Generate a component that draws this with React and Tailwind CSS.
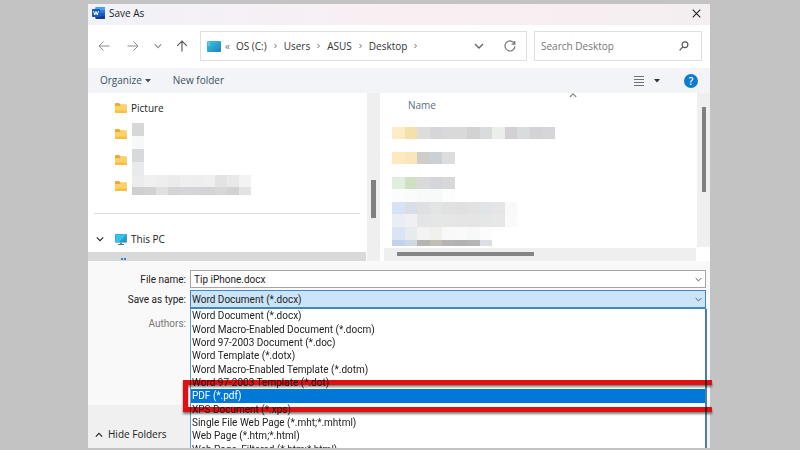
import React, { useState } from 'react';

const fileTypes = [
  'Word Document (*.docx)',
  'Word Macro-Enabled Document (*.docm)',
  'Word 97-2003 Document (*.doc)',
  'Word Template (*.dotx)',
  'Word Macro-Enabled Template (*.dotm)',
  'Word 97-2003 Template (*.dot)',
  'PDF (*.pdf)',
  'XPS Document (*.xps)',
  'Single File Web Page (*.mht;*.mhtml)',
  'Web Page (*.htm;*.html)',
  'Web Page, Filtered (*.htm;*.html)',
];

const path = ['OS (C:)', 'Users', 'ASUS', 'Desktop'];

// pixelated names in the tree
const treeColumn = ['bg-[#d6d7d9]', 'bg-[#f7f8f8]', 'bg-[#d8d9db]', 'bg-[#e9eaeb]'];
const treeTop = ['bg-[#ececed]', 'bg-[#f0f0f0]', 'bg-[#eeeeee]', 'bg-[#ebebeb]', 'bg-[#efefef]', 'bg-[#eeeeee]', 'bg-[#efeff0]', 'bg-[#e4e3e4]', 'bg-[#e9e9e9]', 'bg-[#f3f3f3]'];
const treeBottom = ['bg-[#cfcfd1]', 'bg-[#d2d2d4]', 'bg-[#e0e0e1]', 'bg-[#d4d3d5]', 'bg-[#d6d6d8]', 'bg-[#d5d5d7]', 'bg-[#d4d4d6]', 'bg-[#d8d8d9]', 'bg-[#d3d1d3]', 'bg-[#e3e3e4]'];

// pixelated names in the file list, 13 cells per strip
const fileStrips = [
  { h: 'h-[12px]', cells: ['bg-[#fdecc4]', 'bg-[#f5e0ac]', 'bg-[#dddddd]', 'bg-[#d6d6d8]', 'bg-[#d9d9db]', 'bg-[#d9d9da]', 'bg-[#d2d2d3]', 'bg-[#d9dcdd]', 'bg-[#eceeeb]', 'bg-[#d3d0d3]', 'bg-[#d8dcde]', 'bg-[#d5d2d5]', 'bg-[#d6d6d8]'] },
  { h: 'h-[13px]', cells: [] },
  { h: 'h-[12px]', cells: ['bg-[#fce9c0]', 'bg-[#f9e6bb]', 'bg-[#cfcdc9]', 'bg-[#cad0d4]', 'bg-[#dcdddf]'] },
  { h: 'h-[13px]', cells: [] },
  { h: 'h-[12px]', cells: ['bg-[#dfeedd]', 'bg-[#d0e0c3]', 'bg-[#d9d9da]', 'bg-[#d5d6dc]', 'bg-[#d8d8d8]'] },
  { h: 'h-[13px]', cells: ['bg-[#fbfcfb]', 'bg-[#fafbfa]', 'bg-[#f8f9f9]', 'bg-[#f8f9f9]', 'bg-[#fdfdfd]'] },
  { h: 'h-[12px]', cells: ['bg-[#d5e3f5]', 'bg-[#d9dde8]', 'bg-[#dfe0e2]', 'bg-[#e3e5e5]', 'bg-[#e1e1e1]', 'bg-[#e0e0e1]', 'bg-[#e2e2e2]', 'bg-[#e1e4e5]', 'bg-[#e5e5e6]', 'bg-[#f9f9f9]'] },
  { h: 'h-[13px]', cells: ['bg-[#e9edf4]', 'bg-[#eef0f1]', 'bg-[#e4e5e6]', 'bg-[#e5e6e6]', 'bg-[#e6e6e6]', 'bg-[#e5e5e6]', 'bg-[#e5e5e5]', 'bg-[#e5e6e6]', 'bg-[#e7e7e7]', 'bg-[#fafafa]'] },
  { h: 'h-[13px]', cells: ['bg-[#dbe4f4]', 'bg-[#e8ebed]', 'bg-[#f2f3f2]', 'bg-[#f0f0ec]', 'bg-[#f9f9f9]', 'bg-[#fafafa]', 'bg-[#f7f9f9]', 'bg-[#fcfcfc]'] },
  { h: 'h-[6px]', cells: ['bg-[#c2d1ec]', 'bg-[#cfd8e6]', 'bg-[#b5b5b3]', 'bg-[#bfbfb8]', 'bg-[#b6b4b5]', 'bg-[#b3b2b3]', 'bg-[#b6b5b6]', 'bg-[#dcdfe3]'] },
];

function Chevron({ className, d = 'M1 3l4 4 4-4' }) {
  return (
    <svg viewBox="0 0 10 10" className={className} fill="none" stroke="currentColor" strokeWidth="1.4">
      <path d={d} />
    </svg>
  );
}

function Caret() {
  return (
    <svg viewBox="0 0 6 4" className="w-[6px] h-[4px]" fill="currentColor">
      <path d="M0 0h6L3 3.6z" />
    </svg>
  );
}

function WordIcon() {
  return (
    <svg viewBox="0 0 26 24" className="w-[13px] h-[12px]">
      <rect x="7" y="0" width="19" height="24" rx="2" fill="#2b7cd3" />
      <path d="M7 2a2 2 0 0 1 2-2h15a2 2 0 0 1 2 2v4H7z" fill="#41a5ee" />
      <rect x="7" y="12" width="19" height="6" fill="#185abd" />
      <path d="M7 18h19v4a2 2 0 0 1-2 2H9a2 2 0 0 1-2-2z" fill="#103f91" />
      <rect x="0" y="4" width="16" height="16" rx="1.5" fill="#185abd" />
      <path d="M3 8l2.500 8L8 9l2.500 7L13 8" fill="none" stroke="#fff" strokeWidth="2" />
    </svg>
  );
}

function FolderIcon() {
  return (
    <svg viewBox="0 0 24 20" className="w-[12px] h-[10px] shrink-0">
      <path d="M0 2a2 2 0 0 1 2-2h6l3 3h11a2 2 0 0 1 2 2v4H0z" fill="#e8ab35" />
      <path d="M0 6h9l3-2h12v14a2 2 0 0 1-2 2H2a2 2 0 0 1-2-2z" fill="#fcd266" />
      <path d="M0 15h24v3a2 2 0 0 1-2 2H2a2 2 0 0 1-2-2z" fill="#f6c044" />
    </svg>
  );
}

function DesktopIcon() {
  return (
    <svg viewBox="0 0 28 22" className="w-[14px] h-[11px] shrink-0">
      <defs>
        <linearGradient id="desk" x1="0" y1="0" x2="1" y2="1">
          <stop offset="0" stopColor="#3ccbd8" />
          <stop offset="1" stopColor="#1b7fc0" />
        </linearGradient>
      </defs>
      <rect width="28" height="22" rx="2" fill="url(#desk)" />
      <path d="M3 4h2M3 8h2" stroke="#d8f7fb" strokeWidth="2" />
    </svg>
  );
}

function MonitorIcon() {
  return (
    <svg viewBox="0 0 24 22" className="w-[12px] h-[11px] shrink-0">
      <rect x="0.5" y="0.5" width="23" height="16" rx="1" fill="#1f9ed8" stroke="#1a6d9c" />
      <path d="M1 1h22L8 16H1z" fill="#35c3e6" />
      <path d="M10 17h4v3h-4z" fill="#7a8a94" />
      <path d="M6 21h12" stroke="#5f6f79" strokeWidth="2" />
    </svg>
  );
}

function Strip({ cells, className }) {
  return (
    <div className={`grid ${className}`}>
      {cells.map((cell, i) => (
        <span key={i} className={cell} />
      ))}
    </div>
  );
}

function TitleBar() {
  return (
    <header className="flex items-center h-[21px] pl-1 pr-[9px] pb-[3px] bg-linear-to-r from-[#f1f2f9] via-[#f9eff2] to-[#f5eef1]">
      <WordIcon />
      <h1 className="ml-1 flex-1 text-[10px] text-[#1c1c1c]">Save As</h1>
      <button type="button" aria-label="Close" className="text-[#222]">
        <svg viewBox="0 0 10 10" className="w-[9px] h-[9px]" fill="none" stroke="currentColor" strokeWidth="1.2">
          <path d="M0.8 0.8l8.4 8.4M9.2 0.8L0.8 9.2" />
        </svg>
      </button>
    </header>
  );
}

function NavBar() {
  const [search, setSearch] = useState('');

  return (
    <nav className="flex items-center h-[43px] pl-[10px] pr-2 pb-px text-[#8d8d8d]">
      <button type="button" aria-label="Back">
        <svg viewBox="0 0 12 12" className="w-[12px] h-[12px]" fill="none" stroke="currentColor">
          <path d="M11.5 6H1M5.5 1.5L1 6l4.5 4.5" />
        </svg>
      </button>
      <button type="button" aria-label="Forward" className="ml-[17px]">
        <svg viewBox="0 0 12 12" className="w-[12px] h-[12px]" fill="none" stroke="currentColor">
          <path d="M0.5 6H11M6.5 1.5L11 6l-4.5 4.5" />
        </svg>
      </button>
      <button type="button" aria-label="Recent locations" className="ml-[15px]">
        <Chevron className="w-[8px] h-[8px]" />
      </button>
      <button type="button" aria-label="Up" className="ml-[14px] text-[#5a5a5a]">
        <svg viewBox="0 0 12 12" className="w-[12px] h-[12px]" fill="none" stroke="currentColor" strokeWidth="1.2">
          <path d="M6 11.5V1M1.2 5.8L6 1l4.800 4.800" />
        </svg>
      </button>
      <div className="flex flex-1 items-center h-[30px] ml-3 pl-[6px] pr-[10px] border border-[#dfdfdf] text-[10px] text-[#333]">
        <DesktopIcon />
        <span className="ml-1 text-[#777]">«</span>
        <ol className="flex flex-1 items-center gap-[6px] ml-[6px]">
          {path.map((part) => (
            <li key={part} className="flex items-center gap-[6px]">
              <button type="button">{part}</button>
              <Chevron className="w-[5px] h-[6px]" d="M3 1l4 4-4 4" />
            </li>
          ))}
        </ol>
        <button type="button" aria-label="Previous locations" className="text-[#666]">
          <Chevron className="w-[10px] h-[10px]" />
        </button>
        <button type="button" aria-label="Refresh" className="ml-5 text-[#777]">
          <svg viewBox="0 0 12 12" className="w-[12px] h-[12px]" fill="none" stroke="currentColor" strokeWidth="1.2">
            <path d="M10.600 4A5 5 0 1 0 11 6.200M10.800 1v3.200H7.600" />
          </svg>
        </button>
      </div>
      <label className="flex items-center w-[168px] h-[30px] ml-[7px] pl-[6px] pr-3 border border-[#dfdfdf]">
        <input
          type="text"
          aria-label="Search Desktop"
          placeholder="Search Desktop"
          value={search}
          onChange={(e) => setSearch(e.target.value)}
          className="flex-1 min-w-0 text-[10px] text-[#333] placeholder:text-[#757575] outline-none"
        />
        <svg viewBox="0 0 10 10" className="w-[10px] h-[10px] text-[#555]" fill="none" stroke="currentColor" strokeWidth="1.2">
          <circle cx="6" cy="3.700" r="2.900" />
          <path d="M3.800 5.900L0.600 9.300" />
        </svg>
      </label>
    </nav>
  );
}

function Toolbar() {
  return (
    <div className="flex items-center h-[25px] pl-3 pr-3 bg-[#f3f4f7] text-[10px] text-[#3d4f66]">
      <button type="button" className="flex items-center gap-[3px]">
        Organize <Caret />
      </button>
      <button type="button" className="ml-[22px]">New folder</button>
      <button type="button" aria-label="View" className="flex items-center gap-[10px] ml-auto text-[#333]">
        <svg viewBox="0 0 10 11" className="w-[10px] h-[11px]" stroke="#707070" strokeWidth="1.200">
          <path d="M0 1.500h10M0 4.500h10M0 7.500h10M0 10.500h10" />
        </svg>
        <Caret />
      </button>
      <button type="button" aria-label="Help" className="ml-6 w-[14px] h-[14px] rounded-full bg-[#0f7bd0] text-white text-[10px] leading-[14px] text-center font-semibold">?</button>
    </div>
  );
}

function FolderTree() {
  return (
    <aside className="relative flex flex-col w-[279px] overflow-hidden pt-[2px] text-[10px] text-[#222]">
      <ul className="pl-[27px]">
        {['Picture', '', '', ''].map((name, i) => (
          <li key={i} className="flex items-center gap-1 h-[26px]">
            <FolderIcon />
            {name}
          </li>
        ))}
      </ul>
      <div className="absolute left-[44px] top-[30px]">
        {treeColumn.map((cell, i) => (
          <div key={i} className={`w-[12px] h-[13px] ${cell}`} />
        ))}
        <Strip cells={treeTop} className="w-[119px] h-[12px] grid-cols-10" />
        <Strip cells={treeBottom} className="w-[119px] h-[8px] grid-cols-10" />
      </div>
      <hr className="mt-[14px] mb-3 ml-[6px] mr-[7px] border-[#dcdcdc]" />
      <button type="button" className="flex items-center h-[26px] pl-2">
        <Chevron className="w-[8px] h-[8px] mr-[11px]" />
        <MonitorIcon />
        <span className="ml-1">This PC</span>
      </button>
      <div className="flex flex-1 items-end mr-px pl-[33px] pb-px gap-px bg-[#d9d9d9]">
        <span className="w-[2px] h-[2px] bg-[#2a83cf]" />
        <span className="w-[2px] h-[2px] bg-[#2a83cf]" />
      </div>
    </aside>
  );
}

function FileList() {
  return (
    <section className="flex flex-1 min-w-0 ml-1">
      <div className="flex flex-col flex-1 min-w-0">
        <div className="flex-1 pl-2">
          <div className="flex h-[34px] pl-4 text-[10px] text-[#5b6e85]">
            <span className="w-[161px] pt-[5px]">Name</span>
            <Chevron className="w-[8px] h-[8px] text-[#888]" d="M1 5l4-4 4 4" />
          </div>
          {fileStrips.map((strip, i) => (
            <Strip key={i} cells={strip.cells} className={`w-[163px] grid-cols-13 ${strip.h}`} />
          ))}
        </div>
        <div className="h-[13px] mr-px pt-1 pl-[13px] bg-[#efefef]">
          <div className="w-[137px] h-[4px] bg-[#858585]" />
        </div>
      </div>
      <div className="w-[13px] mb-[14px] pt-[14px] pl-[5px] bg-[#efefef]">
        <div className="w-[4px] h-[85px] bg-[#808080]" />
      </div>
    </section>
  );
}

function SaveForm() {
  const [fileName, setFileName] = useState('Tip iPhone.docx');
  const [type, setType] = useState(fileTypes[0]);

  return (
    <form className="grid grid-cols-[98px_1fr] gap-x-1 gap-y-[2px] pt-[9px] pr-1 font-['Roboto','Open_Sans',sans-serif] text-[10px] text-[#222]">
      <label htmlFor="name" className="self-center text-right">File name:</label>
      <div className="flex items-center h-[18px] pr-[3px] border border-[#a5a5a5] bg-white">
        <input
          id="name"
          type="text"
          value={fileName}
          onChange={(e) => setFileName(e.target.value)}
          className="flex-1 min-w-0 pl-[3px] outline-none"
        />
        <button type="button" aria-label="Recent names" className="text-[#555]">
          <Chevron className="w-[7px] h-[7px]" />
        </button>
      </div>
      <label htmlFor="type" className="self-center text-right">Save as type:</label>
      <div className="relative">
        <div className="flex items-center h-[19px] pr-[3px] border border-b-2 border-[#3f88c5] bg-[#cce4f7]">
          <select
            id="type"
            value={type}
            onChange={(e) => setType(e.target.value)}
            className="flex-1 min-w-0 pl-[1px] appearance-none outline-none"
          >
            {fileTypes.map((t) => (
              <option key={t}>{t}</option>
            ))}
          </select>
          <Chevron className="w-[7px] h-[7px] text-[#555]" />
        </div>
        <ul
          role="listbox"
          aria-label="Save as type"
          className="absolute z-10 top-full left-0 -right-px grid auto-rows-fr h-[147px] border-l border-r-2 border-l-[#5c9fd6] border-r-[#4a7fa8] bg-white"
        >
          {fileTypes.map((t) => (
            <li
              key={t}
              role="option"
              aria-selected={t === 'PDF (*.pdf)'}
              onClick={() => setType(t)}
              className="relative flex items-center pl-[1px] leading-[13px] aria-selected:bg-[#0078d7] aria-selected:text-white"
            >
              {t}
              {t === 'PDF (*.pdf)' && (
                <span className="absolute z-10 -inset-y-[9px] -left-[8px] -right-[7px] border-[5px] border-r-0 border-[#e01010] mix-blend-multiply drop-shadow-[0_2px_1px_#00000080] pointer-events-none" />
              )}
            </li>
          ))}
        </ul>
      </div>
      <span className="pt-[5px] text-right text-[#777]">Authors:</span>
    </form>
  );
}

export default function App() {
  return (
    <main className="flex h-screen pt-1 pb-[2px] pl-[88px] pr-[90px] bg-[#c3c3c3] font-['Open_Sans','Noto_Sans',sans-serif]">
      <div className="flex flex-col flex-1 min-w-0 overflow-y-clip bg-white">
        <TitleBar />
        <NavBar />
        <Toolbar />
        <div className="flex h-[168px]">
          <FolderTree />
          <div className="w-[13px] pt-[87px] pl-1 bg-[#efefef]">
            <div className="w-[5px] h-[38px] bg-[#808080]" />
          </div>
          <FileList />
        </div>
        <div className="flex flex-col flex-1 min-h-0 bg-[#f9f9f9]">
          <SaveForm />
          <footer className="flex items-center h-[43px] mt-auto pl-[7px] pt-4 bg-[#f0f0f0] text-[10px] text-[#222]">
            <button type="button" className="flex items-center gap-[5px]">
              <Chevron className="w-[8px] h-[8px]" d="M1 7l4-4 4 4" />
              Hide Folders
            </button>
          </footer>
        </div>
      </div>
    </main>
  );
}
